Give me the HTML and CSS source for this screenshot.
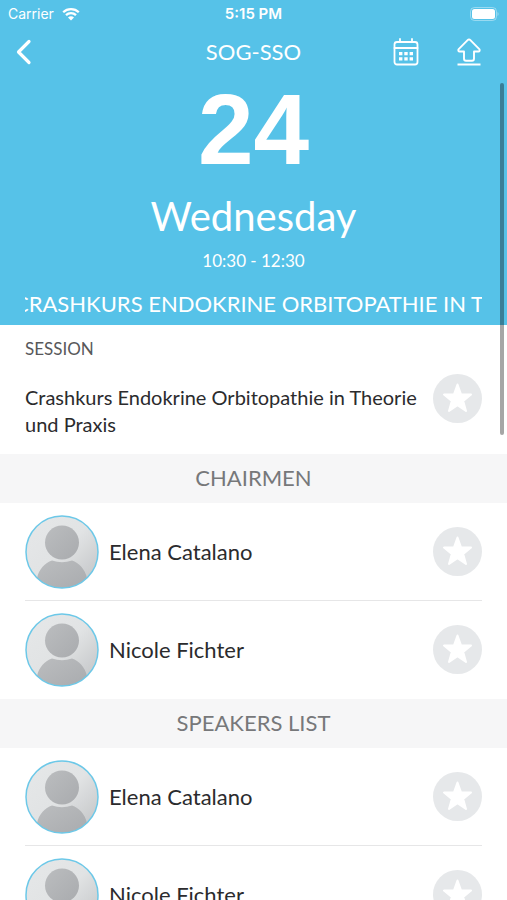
FILE: index.html
```html
<!DOCTYPE html>
<html lang="en">
<head>
    <meta charset="UTF-8">
    <meta name="viewport" content="width=device-width, initial-scale=1.0">
    <title>SOG-SSO</title>
    <link rel="stylesheet" href="styles.css">
</head>
<body>
<!-- Shared icons -->
<svg class="sprite" aria-hidden="true">
    <defs>
        <linearGradient id="avatarBg" x1="0" y1="0" x2="1" y2="1">
            <stop offset="0" stop-color="#e6e8e9"/>
            <stop offset="0.5" stop-color="#e1e3e4"/>
            <stop offset="1" stop-color="#bfc1c3"/>
        </linearGradient>
        <linearGradient id="avatarFg" x1="0" y1="0" x2="1" y2="1">
            <stop offset="0" stop-color="#bbbdbf"/>
            <stop offset="1" stop-color="#a9abae"/>
        </linearGradient>
        <clipPath id="avatarClip"><circle cx="37" cy="37" r="36"/></clipPath>
    </defs>
    <symbol id="avatar" viewBox="0 0 74 74">
        <circle cx="37" cy="37" r="36" fill="url(#avatarBg)"/>
        <g clip-path="url(#avatarClip)" fill="url(#avatarFg)">
            <circle cx="37" cy="27.500" r="17"/>
            <path d="M12 74V63C14 54 20 48 27 45.500Q37 49 47 45.500C54 48 60 54 62 63V74Z"/>
        </g>
        <circle cx="37" cy="37" r="36" fill="none" stroke="#6cc8e8" stroke-width="1.500"/>
    </symbol>
    <symbol id="star" viewBox="0 0 49 49">
        <circle cx="24.500" cy="24.500" r="24.500" fill="#e6e8ea"/>
        <path d="M24.500 10.500L28 20.300L38 20.600L30.200 27L33 37L24.500 31.200L16 37L18.800 27L11 20.600L21 20.300Z" fill="#fff" stroke="#fff" stroke-width="2" stroke-linejoin="round"/>
    </symbol>
</svg>

<header class="top">
    <div class="status-bar">
        <div class="carrier">
            <span>Carrier</span>
            <svg width="18" height="14" viewBox="0 0 18 14">
                <path d="M1.200 5.200C5.500 1 12.500 1 16.800 5.200M4 8.200C6.800 5.500 11.200 5.500 14 8.200" fill="none" stroke="#fff" stroke-width="2.300"/>
                <path d="M9 13.500L6 10.500C7.700 8.900 10.300 8.900 12 10.500Z" fill="#fff"/>
            </svg>
        </div>
        <div class="clock">5:15 PM</div>
        <svg class="battery" width="30" height="14" viewBox="0 0 30 14">
            <rect x="1.500" y="0.500" width="26" height="13" rx="4" fill="none" stroke="#fff" stroke-opacity="0.400"/>
            <rect x="3" y="2" width="23" height="10" rx="2.500" fill="#fff"/>
            <path d="M28.500 5C30 5.500 30 8.500 28.500 9Z" fill="#fff" fill-opacity="0.400"/>
        </svg>
    </div>
    <nav class="nav-bar">
        <button class="icon-button back" aria-label="Back">
            <svg width="16" height="26" viewBox="0 0 16 26">
                <path d="M13 2.500L2.500 13L13 23.500" fill="none" stroke="#fff" stroke-width="3.200" stroke-linecap="round" stroke-linejoin="round"/>
            </svg>
        </button>
        <h1 class="nav-title">SOG-SSO</h1>
        <div class="nav-actions">
            <button class="icon-button" aria-label="Add to calendar">
                <svg width="26" height="28" viewBox="0 0 26 28">
                    <g fill="none" stroke="#fff" stroke-width="1.800" stroke-linecap="round">
                        <rect x="1.500" y="4" width="23" height="22.500" rx="2.500"/>
                        <path d="M1.500 10H24.500M7 1V4M19 1V4"/>
                    </g>
                    <path d="M6 14h3.400v3.200h-3.400zM11.300 14h3.400v3.200h-3.400zM16.600 14h3.400v3.200h-3.400zM6 19.200h3.400v3.200h-3.400zM11.300 19.200h3.400v3.200h-3.400zM16.600 19.200h3.400v3.200h-3.400z" fill="#fff"/>
                </svg>
            </button>
            <button class="icon-button" aria-label="Share">
                <svg width="26" height="28" viewBox="0 0 26 28">
                    <path d="M13 1.500C12.500 1.500 12 1.700 11.600 2.100L2.700 11.200C1.800 12.300 2.400 13.500 3.700 13.500H8V20.500C8 22 8.600 22.800 10 22.800H16C17.400 22.800 18 22 18 20.500V13.500H22.300C23.600 13.500 24.200 12.300 23.300 11.200L14.400 2.100C14 1.700 13.500 1.500 13 1.500Z" fill="none" stroke="#fff" stroke-width="1.900" stroke-linejoin="round"/>
                    <path d="M1.500 26.500H24.500" stroke="#fff" stroke-width="2"/>
                </svg>
            </button>
        </div>
    </nav>
</header>

<main class="content">
    <section class="hero">
        <div class="day">24</div>
        <div class="weekday">Wednesday</div>
        <div class="time">10:30 - 12:30</div>
        <div class="marquee">CRASHKURS ENDOKRINE ORBITOPATHIE IN THEORIE UND PRAXIS</div>
    </section>

    <section class="session">
        <h2 class="session-label">SESSION</h2>
        <div class="session-row">
            <p class="session-title">Crashkurs Endokrine Orbitopathie in Theorie und Praxis</p>
            <button class="star-button" aria-label="Add to favourites"><svg width="49" height="49"><use href="#star"/></svg></button>
        </div>
    </section>

    <h2 class="list-title">CHAIRMEN</h2>
    <ul class="people">
        <li class="person">
            <svg class="avatar" width="74" height="74"><use href="#avatar"/></svg>
            <span class="name">Elena Catalano</span>
            <button class="star-button" aria-label="Add to favourites"><svg width="49" height="49"><use href="#star"/></svg></button>
        </li>
        <li class="person">
            <svg class="avatar" width="74" height="74"><use href="#avatar"/></svg>
            <span class="name">Nicole Fichter</span>
            <button class="star-button" aria-label="Add to favourites"><svg width="49" height="49"><use href="#star"/></svg></button>
        </li>
    </ul>

    <h2 class="list-title">SPEAKERS LIST</h2>
    <ul class="people">
        <li class="person">
            <svg class="avatar" width="74" height="74"><use href="#avatar"/></svg>
            <span class="name">Elena Catalano</span>
            <button class="star-button" aria-label="Add to favourites"><svg width="49" height="49"><use href="#star"/></svg></button>
        </li>
        <li class="person">
            <svg class="avatar" width="74" height="74"><use href="#avatar"/></svg>
            <span class="name">Nicole Fichter</span>
            <button class="star-button" aria-label="Add to favourites"><svg width="49" height="49"><use href="#star"/></svg></button>
        </li>
    </ul>
</main>
<div class="scroll-thumb"></div>
</body>
</html>
```
FILE: styles.css
```css
* {
    box-sizing: border-box;
}

body {
    font-family: Lato, "Open Sans", sans-serif;
    background-color: #fff;
    color: #2b2b2d;
    margin: 0;
    height: 100vh;
    display: flex;
    flex-direction: column;
    position: relative;
    overflow: hidden;
}

h1, h2, p, ul {
    margin: 0;
    padding: 0;
    font-weight: normal;
}

button {
    background: none;
    border: none;
    padding: 0;
    cursor: pointer;
}

svg {
    display: block;
}

.sprite {
    position: absolute;
    width: 0;
    height: 0;
}

/* Status and navigation bars */
.top {
    background-color: #56c2e8;
    color: #fff;
}

.status-bar {
    display: grid;
    grid-template-columns: 1fr auto 1fr;
    align-items: center;
    height: 27px;
    padding: 0 8px;
    font-family: Inter, sans-serif;
    font-size: 14px;
}

.carrier {
    display: flex;
    align-items: center;
    gap: 8px;
}

.clock {
    font-size: 15px;
    font-weight: 600;
}

.battery {
    justify-self: end;
}

.nav-bar {
    display: grid;
    grid-template-columns: 1fr auto 1fr;
    align-items: center;
    height: 50px;
    padding: 0 16px;
}

.back {
    justify-self: start;
}

.nav-title {
    font-size: 22px;
    line-height: 28px;
}

.nav-actions {
    display: flex;
    justify-content: flex-end;
    gap: 37px;
    padding-right: 9px;
}

/* Date block */
.content {
    flex: 1;
    min-height: 0;
    overflow: hidden;
}

.hero {
    background-color: #56c2e8;
    color: #fff;
    text-align: center;
    padding: 0 25px 7px;
}

.day {
    font-family: "Liberation Sans", Arial, sans-serif;
    font-size: 100px;
    font-weight: bold;
    line-height: 104px;
}

.weekday {
    font-size: 40px;
    line-height: 70px;
}

.time {
    font-size: 17px;
    line-height: 20px;
}

.marquee {
    margin-top: 19px;
    font-size: 22px;
    line-height: 28px;
    text-align: left;
    text-indent: -11px;
    white-space: nowrap;
    overflow: hidden;
}

/* Session */
.session {
    padding: 14px 25px 16px;
}

.session-label {
    font-size: 17px;
    line-height: 20px;
    color: #58585a;
}

.session-row {
    display: flex;
    align-items: flex-start;
    gap: 12px;
    margin-top: 15px;
}

.session-title {
    flex: 1;
    padding-top: 10px;
    font-size: 20px;
    line-height: 27px;
}

/* Lists of people */
.list-title {
    background-color: #f6f6f7;
    color: #77787a;
    font-size: 22px;
    line-height: 47px;
    padding-bottom: 2px;
    text-align: center;
}

.people {
    list-style: none;
    padding: 0 25px;
}

.person {
    display: flex;
    align-items: center;
    height: 98px;
    gap: 10px;
    border-bottom: 1px solid #e6e6e7;
}

.person:last-child {
    border-bottom-color: transparent;
}

.name {
    flex: 1;
    font-size: 22px;
    line-height: 28px;
}

.scroll-thumb {
    position: absolute;
    top: 83px;
    right: 3px;
    width: 4px;
    height: 352px;
    border-radius: 2px;
    background-color: rgba(0, 0, 0, 0.35);
}
```
